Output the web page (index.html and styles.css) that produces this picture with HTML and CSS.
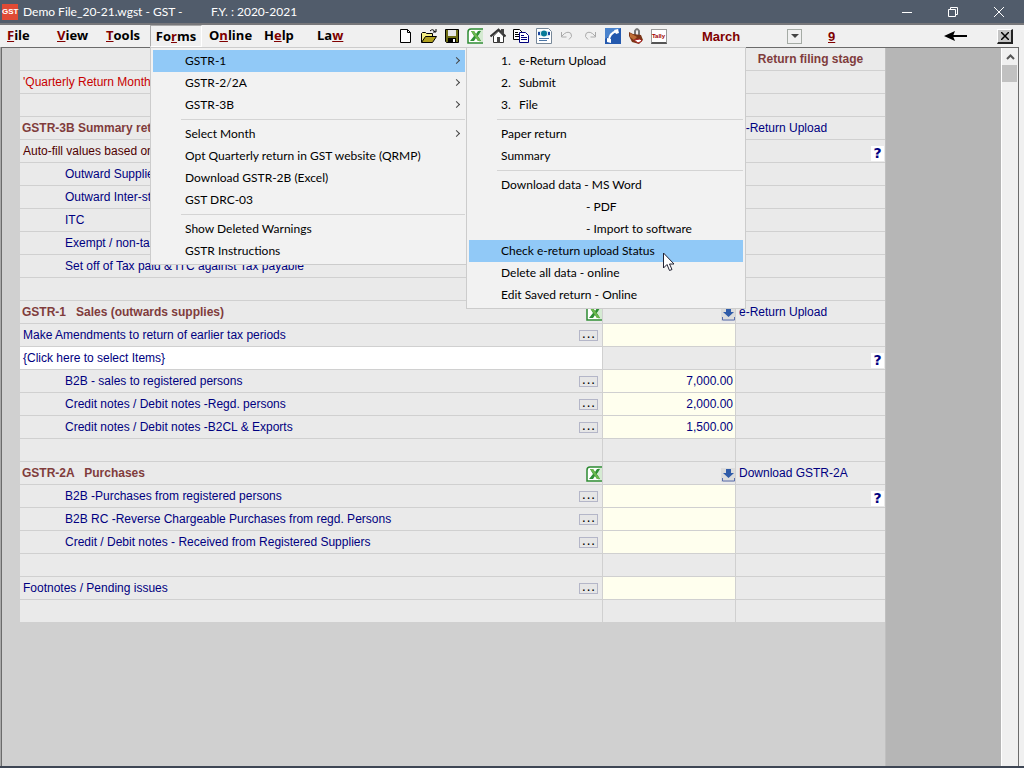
FILE: index.html
```html
<!DOCTYPE html>
<html lang="en">
<head>
<meta charset="UTF-8">
<meta name="viewport" content="width=device-width, initial-scale=1.0">
<title>Demo File_20-21.wgst - GST</title>
<link rel="stylesheet" href="styles.css">
</head>
<body>

<svg class="defs" width="0" height="0">
    <symbol id="excel" viewBox="0 0 16 16">
        <path d="M1 3 3 1H16V16H1Z" fill="#fff"/>
        <path d="M16 1H4Q1 1 1 4V15H16" fill="none" stroke="#2d8a32" stroke-width="1.5"/>
        <path d="M12 2h4v12h-4z" fill="#d5ead2"/>
        <path d="M4 3h3l2 3 2-3h3l-3 5 3 5h-3l-2-3-2 3H3l4-5z" fill="#2f8f35"/>
        <path d="M4 3h3l7 10h-3z" fill="#6cb84e"/>
    </symbol>
    <symbol id="download" viewBox="0 0 14 14">
        <path d="M0 0h14v14H0z" fill="#dcdcdc"/>
        <path d="M5 1h5v4h3L7.500 10 2 5h3z" fill="#2f5ba8"/>
        <path d="M1.500 10v3h12v-3" fill="none" stroke="#5a6fae"/>
    </symbol>
</svg>

<div class="window">
    <header class="titlebar">
        <span class="logo">GST</span>
        <span class="file-name">Demo File_20-21.wgst - GST -</span>
        <span class="year">F.Y. : 2020-2021</span>
        <div class="window-buttons">
            <button aria-label="Minimize"><svg width="12" height="12"><path d="M1 6.500h10" stroke="#fff"/></svg></button>
            <button aria-label="Restore"><svg width="12" height="12" fill="none" stroke="#fff"><path d="M1.500 3.500h7v7h-7zM3.500 3.500v-2h7v7h-2"/></svg></button>
            <button aria-label="Close"><svg width="12" height="12"><path d="M1 1l10 10M11 1L1 11" stroke="#fff"/></svg></button>
        </div>
    </header>

    <div class="menubar">
        <nav class="menus">
            <button><u>F</u>ile</button>
            <button><u>V</u>iew</button>
            <button><u>T</u>ools</button>
            <div class="menu-holder">
                <button class="open">Fo<u>r</u>ms</button>
                <div class="popup forms-popup">
                    <button class="item active">GSTR-1<i class="more"></i></button>
                    <button class="item">GSTR-2/2A<i class="more"></i></button>
                    <button class="item">GSTR-3B<i class="more"></i></button>
                    <hr>
                    <button class="item">Select Month<i class="more"></i></button>
                    <button class="item">Opt Quarterly return in GST website (QRMP)</button>
                    <button class="item">Download GSTR-2B (Excel)</button>
                    <button class="item">GST DRC-03</button>
                    <hr>
                    <button class="item">Show Deleted Warnings</button>
                    <button class="item">GSTR Instructions</button>
                </div>
                <div class="popup sub-popup">
                    <button class="item"><span class="num">1.</span>e-Return Upload</button>
                    <button class="item"><span class="num">2.</span>Submit</button>
                    <button class="item"><span class="num">3.</span>File</button>
                    <hr>
                    <button class="item">Paper return</button>
                    <button class="item">Summary</button>
                    <hr>
                    <button class="item">Download data - MS Word</button>
                    <button class="item indent">- PDF</button>
                    <button class="item indent">- Import to software</button>
                    <button class="item active">Check e-return upload Status
                        <svg class="cursor" width="13" height="20"><path d="M1.500 1v15l3.500-3.500 2.500 6 2.500-1-2.500-5.500h4.500z" fill="#fff" stroke="#223"/></svg>
                    </button>
                    <button class="item">Delete all data - online</button>
                    <button class="item">Edit Saved return - Online</button>
                </div>
            </div>
            <button>O<u>n</u>line</button>
            <button>H<u>e</u>lp</button>
            <button>La<u>w</u></button>
        </nav>

        <div class="tools">
            <button aria-label="New"><svg width="16" height="16"><path d="M2.500 1.500h7l3 3v10h-10z" fill="#fff" stroke="#000"/><path d="M9.500 1.500v3h3" fill="none" stroke="#000"/></svg></button>
            <button aria-label="Open"><svg width="16" height="16"><path d="M.5 14V5.500l1-1h3l1 1h6V8" fill="#f4ee84" stroke="#000"/><path d="M.5 14.500l4-6h11l-4 6z" fill="#b0a020" stroke="#000"/><path d="M9 3q3-3 5 1m-2 0h3V1" fill="none" stroke="#000"/></svg></button>
            <button aria-label="Save"><svg width="16" height="16"><path d="M1.500 1.500h13v13h-12l-1-1z" fill="#6d6d16" stroke="#000"/><path d="M4 2h8v6H4z" fill="#e6e6e6"/><path d="M4 10h8v5H4z" fill="#000"/><path d="M9 11h2v3H9z" fill="#fff"/></svg></button>
            <button aria-label="Excel"><svg width="16" height="16"><use href="#excel"/></svg></button>
            <button aria-label="Home"><svg width="16" height="16"><path d="M3.500 8v6.500h10V8L8.500 3z" fill="#fff" stroke="#333"/><path d="M.5 8.500l8-7 7 7" fill="none" stroke="#333" stroke-width="2"/><path d="M11 1h3v5h-3zM7 9h3v6H7z" fill="#444"/></svg></button>
            <button aria-label="Copy"><svg width="16" height="16"><path d="M.5 1.500h6l3 3v7h-9z" fill="#fff" stroke="#000"/><path d="M2 4.500h3M2 6.500h4M2 8.500h4" stroke="#000"/><path d="M6.500 4.500h6l3 3v7h-9z" fill="#fff" stroke="#00007c"/><path d="M8 7.500h3M8 9.500h6M8 11.500h6" stroke="#00007c"/></svg></button>
            <button aria-label="Web report"><svg width="16" height="16"><path d="M.5 .5h12l3 3v12H.5z" fill="#fff" stroke="#789"/><path d="M2 3h12v5H2z" fill="#cfe7ef"/><circle cx="8" cy="5.500" r="3" fill="#087b98"/><path d="M3 4v3m10-3v3" stroke="#1c46a0" stroke-width="2"/><path d="M3 10.500h10M3 12.500h8" stroke="#4b75a5"/></svg></button>
            <button aria-label="Undo"><svg width="16" height="16" fill="none" stroke="#aaa"><path d="M2.500 4v5h5M3 8q5-6 9-2.500 2 3-2 6"/></svg></button>
            <button aria-label="Redo"><svg width="16" height="16" fill="none" stroke="#aaa"><path d="M13.500 4v5h-5M13 8q-5-6-9-2.500-2 3 2 6"/></svg></button>
            <button aria-label="Call"><svg width="16" height="16"><path d="M0 0h16v16H0z" fill="#2459ae"/><path d="M0 0h16L0 11z" fill="#4a83cd"/><path d="M4 13Q4 5 12 3" fill="none" stroke="#fff" stroke-width="2"/><path d="M9 2l4-1 1 4-3 1zM2 10l4 1v4l-4-1z" fill="#fff"/></svg></button>
            <button aria-label="Toolbox"><svg width="16" height="16"><path d="M7 7V3q2-4 4 0v5" fill="none" stroke="#777" stroke-width="2"/><path d="M1 4l4 2 8 1 2 5-4 4-7-2-3-6z" fill="#7a3516"/><path d="M2 5l7 4-3 3-4-3z" fill="#bd6d35"/><path d="M6 12l6-1 2 2-4 2z" fill="#fff" stroke="#a22"/></svg></button>
            <button aria-label="Tally" class="tally"><span>Tally</span></button>
        </div>

        <div class="month">
            <select aria-label="Month"><option>March</option></select>
            <span class="drop"><svg width="8" height="5"><path d="M0 0h8L4 4z" fill="#444"/></svg></span>
        </div>
        <a href="#" class="count">9</a>
        <button class="back" aria-label="Back"><svg width="24" height="12"><path d="M8 6h15" stroke="#000" stroke-width="2"/><path d="M0 6l11-5-2 5 2 5z"/></svg></button>
        <button class="close" aria-label="Close file"><svg width="8" height="8"><path d="M0 0l8 8M8 0L0 8" stroke="#000" stroke-width="1.5"/></svg></button>
    </div>

    <main class="workspace">
        <div class="sheet">
            <table>
                <colgroup><col><col class="col-value"><col class="col-stage"></colgroup>
                <tr><td></td><td></td><th class="stage">Return filing stage</th></tr>
                <tr><td class="red">'Quarterly Return Month</td><td></td><td></td></tr>
                <tr><td></td><td></td><td></td></tr>
                <tr><th>GSTR-3B Summary return</th><td></td><td><a href="#">e-Return Upload</a></td></tr>
                <tr><td class="dark">Auto-fill values based on</td><td></td><td><button class="help">?</button></td></tr>
                <tr><td class="sub">Outward Supplies</td><td></td><td></td></tr>
                <tr><td class="sub">Outward Inter-state</td><td></td><td></td></tr>
                <tr><td class="sub">ITC</td><td></td><td></td></tr>
                <tr><td class="sub">Exempt / non-taxable</td><td></td><td></td></tr>
                <tr><td class="sub">Set off of Tax paid &amp; ITC against Tax payable</td><td></td><td></td></tr>
                <tr><td></td><td></td><td></td></tr>
                <tr><th>GSTR-1 &nbsp; Sales (outwards supplies)<svg class="xl" width="16" height="16"><use href="#excel"/></svg></th><td><svg class="dl" width="14" height="14"><use href="#download"/></svg></td><td><a href="#">e-Return Upload</a></td></tr>
                <tr><td>Make Amendments to return of earlier tax periods<button class="dots">···</button></td><td class="value"></td><td></td></tr>
                <tr><td class="select">{Click here to select Items}</td><td></td><td><button class="help">?</button></td></tr>
                <tr><td class="sub">B2B - sales to registered persons<button class="dots">···</button></td><td class="value">7,000.00</td><td></td></tr>
                <tr><td class="sub">Credit notes / Debit notes -Regd. persons<button class="dots">···</button></td><td class="value">2,000.00</td><td></td></tr>
                <tr><td class="sub">Credit notes / Debit notes -B2CL &amp; Exports<button class="dots">···</button></td><td class="value">1,500.00</td><td></td></tr>
                <tr><td></td><td></td><td></td></tr>
                <tr><th>GSTR-2A &nbsp; Purchases<svg class="xl" width="16" height="16"><use href="#excel"/></svg></th><td><svg class="dl" width="14" height="14"><use href="#download"/></svg></td><td><a href="#">Download GSTR-2A</a></td></tr>
                <tr><td class="sub">B2B -Purchases from registered persons<button class="dots">···</button></td><td class="value"></td><td><button class="help">?</button></td></tr>
                <tr><td class="sub">B2B RC -Reverse Chargeable Purchases from regd. Persons<button class="dots">···</button></td><td class="value"></td><td></td></tr>
                <tr><td class="sub">Credit / Debit notes - Received from Registered Suppliers<button class="dots">···</button></td><td class="value"></td><td></td></tr>
                <tr><td></td><td></td><td></td></tr>
                <tr><td>Footnotes / Pending issues<button class="dots">···</button></td><td class="value"></td><td></td></tr>
                <tr><td></td><td></td><td></td></tr>
            </table>
        </div>
        <div class="scrollbar">
            <button class="up" aria-label="Scroll up"><svg width="9" height="6"><path d="M1 5l3.500-3.500L8 5" fill="none" stroke="#555" stroke-width="2"/></svg></button>
            <div class="thumb"></div>
        </div>
    </main>
</div>

</body>
</html>
```
FILE: styles.css
```css
* {
    box-sizing: border-box;
}
body {
    margin: 0;
    font-family: "Liberation Sans", Arial, sans-serif;
    font-size: 12px;
    color: #000080;
}
button {
    font: inherit;
    color: inherit;
    background: none;
    border: none;
    padding: 0;
}
.defs {
    position: absolute;
}
.window {
    height: 100vh;
    display: flex;
    flex-direction: column;
    background-color: #f0f0f0;
    border-bottom: 2px solid #3e4654;
    overflow: hidden;
}

/* title bar */
.titlebar {
    height: 23px;
    display: flex;
    align-items: center;
    background-color: #515c6b;
    color: #fff;
    font-family: Lato, sans-serif;
    font-size: 12px;
    padding-left: 2px;
    flex-shrink: 0;
}
.logo {
    width: 16px;
    height: 16px;
    background-color: #e04a35;
    font-family: "Liberation Sans", sans-serif;
    font-size: 8px;
    font-weight: bold;
    line-height: 16px;
    text-align: center;
}
.file-name {
    width: 193px;
    padding-left: 5px;
}
.window-buttons {
    display: flex;
    margin-left: auto;
    padding-right: 2px;
}
.window-buttons button {
    width: 46px;
    height: 20px;
}
.window-buttons svg {
    display: block;
    margin: 0 auto;
}

/* menu bar */
.menubar {
    height: 24px;
    display: flex;
    align-items: center;
    border-top: 2px solid #77777a;
    flex-shrink: 0;
    color: #000;
}
.menus {
    display: grid;
    grid-template-columns: 50px 49px 44px 59px 55px 53px 77px;
    padding-left: 7px;
    height: 22px;
    font-family: "Open Sans", sans-serif;
    font-size: 13px;
    font-weight: bold;
    line-height: 18px;
}
.menus > button {
    padding-bottom: 2px;
    text-align: left;
}
.menus u, .count {
    color: #800000;
}
.menu-holder {
    position: relative;
}
.open {
    width: 52px;
    height: 22px;
    padding-bottom: 1px;
    border: 1px solid #aaa;
    border-right-color: #fff;
    border-bottom-color: #fff;
}
.popup {
    position: absolute;
    top: 22px;
    z-index: 10;
    padding: 2px;
    background-color: #f2f2f2;
    border: 1px solid #ccc;
    font-family: Lato, sans-serif;
    font-size: 12px;
    font-weight: normal;
}
.forms-popup {
    left: 0;
    width: 318px;
}
.sub-popup {
    left: 316px;
    width: 280px;
}
.item {
    position: relative;
    display: flex;
    align-items: center;
    width: 100%;
    height: 22px;
    padding-left: 32px;
    padding-bottom: 1px;
    text-align: left;
    white-space: nowrap;
}
.item.active {
    background-color: #91c9f7;
}
.item.indent {
    padding-left: 117px;
}
.num {
    width: 18px;
}
.popup hr {
    height: 1px;
    margin: 3px 0 3px 28px;
    border: none;
    background-color: #d4d4d4;
}
.more {
    width: 5px;
    height: 5px;
    margin-left: auto;
    margin-right: 6px;
    border: solid #444;
    border-width: 1px 1px 0 0;
    transform: rotate(45deg);
}
.cursor {
    position: absolute;
    left: 193px;
    top: 12px;
}
.tools {
    display: flex;
}
.tools button {
    width: 23px;
    height: 20px;
    display: flex;
    align-items: center;
    justify-content: center;
}
.tally span {
    width: 16px;
    height: 15px;
    background-color: #fff;
    border: 1px solid #999;
    border-bottom: 2px solid #555;
    color: #a00000;
    font-size: 6px;
    font-weight: bold;
    line-height: 12px;
}
.month {
    display: flex;
    align-items: center;
    margin-left: 32px;
}
.month select {
    width: 85px;
    appearance: none;
    border: none;
    background: none;
    padding: 0;
    color: #800000;
    font: bold 13px "Liberation Sans", sans-serif;
}
.drop {
    width: 15px;
    height: 15px;
    display: flex;
    align-items: center;
    justify-content: center;
    border: 1px solid #a5aba5;
}
.count {
    margin-left: 26px;
    font-size: 13px;
    font-weight: bold;
}
.back {
    margin-left: auto;
    height: 12px;
}
.back svg {
    display: block;
}
.close {
    width: 16px;
    height: 15px;
    margin: 0 11px 0 29px;
    display: flex;
    align-items: center;
    justify-content: center;
    background-color: #c4c4c4;
    border: 1px solid #fff;
    border-right: 2px solid #222;
    border-bottom: 2px solid #222;
}

/* sheet */
.workspace {
    flex: 1;
    min-height: 0;
    display: flex;
    margin-right: 5px;
    background-color: #b6b6b6;
    border: 1px solid #6b6b6b;
    border-bottom: none;
    box-shadow: -1px 0 #aaa;
    margin-left: 1px;
}
.sheet {
    flex: 1;
    margin-right: 115px;
    padding-left: 18px;
    background-color: #d0d0d0;
    border-right: 1px solid #c0c0c0;
}
table {
    width: 100%;
    table-layout: fixed;
    border-collapse: separate;
    border-spacing: 0;
}
.col-value {
    width: 133px;
}
.col-stage {
    width: 149px;
}
td, th {
    height: 23px;
    padding: 0 2px 0 3px;
    background-color: #eaeaea;
    border-right: 1px solid #d0d0d0;
    border-bottom: 1px solid #d0d0d0;
    line-height: 22px;
    text-align: left;
    white-space: nowrap;
}
td:last-child, th:last-child {
    border-right: none;
}
th {
    padding-left: 2px;
    color: #803c3c;
}
th.stage {
    text-align: center;
}
td.sub {
    padding-left: 45px;
}
td.red {
    color: #c80000;
}
td.dark {
    color: #500000;
}
td.select {
    background-color: #fff;
}
td.value {
    background-color: #ffffee;
    text-align: right;
}
td a {
    color: inherit;
    text-decoration: none;
}
/* small controls that sit at the right edge of a cell */
.dots, .help, .xl, .dl {
    float: right;
}
.dots {
    width: 19px;
    height: 11px;
    margin: 6px 2px 0 0;
    border: 1px solid #b4b6c8;
    background-color: #e6e6e6;
    color: #000;
    font-size: 14px;
    line-height: 8px;
}
.xl, .dl {
    margin: 4px -2px 0 0;
}
.help {
    width: 13px;
    height: 15px;
    margin: 4px -1px 0 0;
    background-color: #fff;
    font-family: "DejaVu Sans", sans-serif;
    font-size: 14px;
    font-weight: bold;
    line-height: 15px;
}

/* scrollbar */
.scrollbar {
    width: 17px;
    background-color: #f0f0f0;
    border-left: 1px solid #fff;
}
.up {
    display: flex;
    align-items: center;
    justify-content: center;
    width: 16px;
    height: 17px;
}
.thumb {
    width: 15px;
    height: 17px;
    background-color: #c1c1c1;
}
```
